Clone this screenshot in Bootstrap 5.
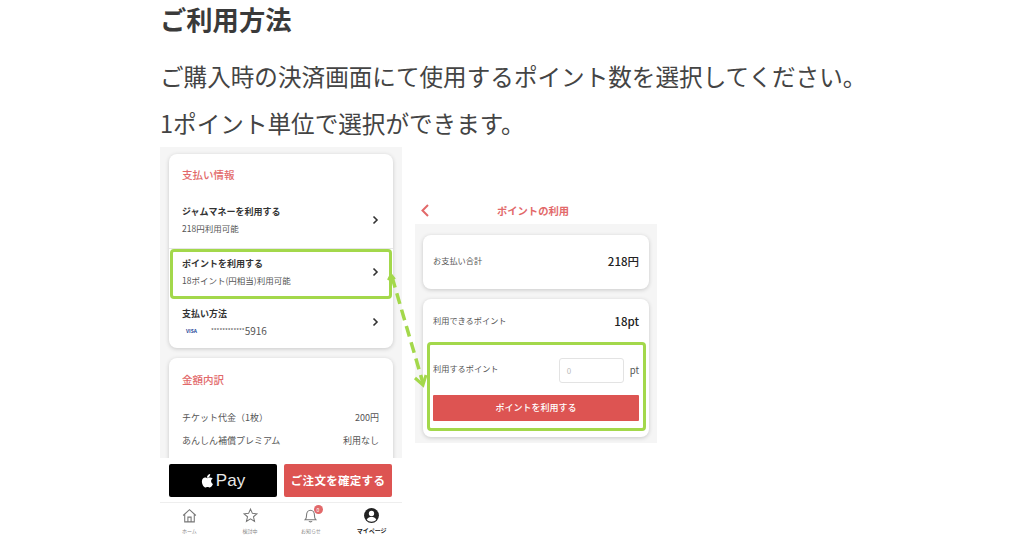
<!DOCTYPE html>
<html lang="ja">
<head>
  <meta charset="UTF-8" />
  <title>ご利用方法</title>
  <link href="https://cdn.jsdelivr.net/npm/bootstrap@5.3.0/dist/css/bootstrap.min.css" rel="stylesheet" />
  <style>
    html, body { height: 538px; overflow: hidden; background: #fff; }
    body { font-family: "Noto Sans CJK JP", "Noto Sans", sans-serif; color: #3d3d3d; }
    .page-wrap { position: relative; width: 1024px; height: 538px; padding-left: 160px; overflow: hidden; }
    .page-title { font-size: 26.3px; font-weight: 700; line-height: 38px; margin: 0; color: #3a3a3a; height: 53px; }
    .page-text { font-size: 23.6px; line-height: 47px; margin: 0; white-space: nowrap; color: #444; }
    .shots { gap: 13px; }
    .phone-left { width: 242px; height: 391px; flex: none; }
    .pay-area { height: 311px; background: #f5f5f5; padding: 7px 9px 0 9px; overflow: hidden; }
    .pay-card { background: #fff; border-radius: 8px; box-shadow: 0 1px 4px rgba(0,0,0,.18); }
    .info-card { height: 194px; padding-top: 14px; margin-bottom: 10px; }
    .sum-card { height: 120px; padding: 15px 14px 0 13px; }
    .red-head { color: #e2696a; font-size: 10.5px; font-weight: 500; line-height: 14px; }
    .info-head { padding-left: 13px; }
    .pay-row { height: 50px; padding: 0 13px 0 13px; display: flex; align-items: center; justify-content: space-between; }
    .pay-row-first { height: 53px; margin-top: 14px; border-bottom: 1px solid #e6e6e6; padding-bottom: 0; }
    .row-text { padding-bottom: 4px; }
    .row-main { font-size: 9px; font-weight: 700; color: #333; line-height: 13px; }
    .row-sub { font-size: 8.5px; color: #555; line-height: 13px; margin-top: 4px; white-space: nowrap; }
    .row-arrow { width: 7px; height: 10px; flex: none; margin-right: 1px; margin-bottom: 4px; }
    .picked { outline: 3px solid #a3d84b; outline-offset: -3px; border-radius: 4px; margin: 0 1px; padding: 0 12px; }
    .visa-text { color: #2b4b9b; font-size: 5px; font-weight: 700; width: 29px; padding-left: 4px; }
    .card-stars { font-size: 6px; }
    .card-last { font-size: 10px; }
    .sum-row { display: flex; justify-content: space-between; font-size: 9px; color: #555; line-height: 13px; }
    .buy-bar { height: 45px; background: #fff; padding: 6px 10px 0 9px; gap: 7px; border-bottom: 1px solid #eee; }
    .apple-btn { width: 108px; height: 33px; background: #000; color: #e8e8e8; border-radius: 2px; font-family: "Liberation Sans", sans-serif; font-size: 17px; gap: 2px; }
    .order-btn { width: 108px; height: 33px; background: #dd5452; color: #fff; border-radius: 2px; font-size: 11.5px; font-weight: 700; letter-spacing: .3px; }
    .tab-bar { height: 35px; margin-left: -1px; }
    .tab-item { width: 61px; color: #8a8a8a; font-size: 5px; line-height: 7px; gap: 3px; position: relative; }
    .tab-item svg { width: 17px; height: 17px; }
    .tab-on { color: #222; font-weight: 700; font-size: 6px; }
    .notice-dot { position: absolute; top: -2px; left: 33px; width: 9px; height: 9px; border-radius: 50%; background: #e2696a; color: #fff; font-size: 5px; line-height: 9px; text-align: center; }
    .phone-right { width: 242px; flex: none; margin-top: 48px; }
    .back-head { height: 29px; position: relative; color: #e2696a; font-size: 10.3px; font-weight: 700; padding-right: 6px; padding-top: 2px; }
    .back-mark { position: absolute; left: 5px; top: 8px; width: 10px; height: 15px; }
    .point-area { height: 219px; background: #f5f5f5; padding: 11px 8px 0 8px; }
    .total-card { height: 54px; padding: 0 10px; margin-bottom: 10px; font-size: 8.2px; color: #555; }
    .big-num { font-size: 11.5px; font-weight: 500; color: #222; }
    .soft-label { margin-bottom: 3px; }
    .point-card { height: 138px; }
    .can-row { height: 43px; padding: 3px 10px 0 10px; font-size: 8.2px; color: #555; }
    .use-box { height: 89px; margin: 0 3px 0 4px; padding: 0 4px 0 3px; border: 3px solid #a3d84b; border-radius: 4px; }
    .use-line { height: 50px; font-size: 8.2px; color: #555; }
    .point-input { width: 65px; height: 25px; border: 1px solid #e3e3e3; border-radius: 3px; font-size: 8px; color: #bbb; padding-left: 7px; line-height: 23px; margin-left: auto; margin-right: 6px; }
    .unit-pt { font-size: 9.5px; }
    .use-btn { height: 26px; background: #dd5452; color: #fff; border-radius: 1px; font-size: 9px; font-weight: 500; }
    .jump-arrow { position: absolute; left: 380px; top: 270px; width: 50px; height: 125px; pointer-events: none; }
  </style>
</head>
<body>
  <div class="page-wrap">
    <h1 class="page-title">ご利用方法</h1>
    <p class="page-text">ご購入時の決済画面にて使用するポイント数を選択してください。</p>
    <p class="page-text">1ポイント単位で選択ができます。</p>

    <div class="d-flex shots">
      <!-- 支払い画面 -->
      <div class="phone-left">
        <div class="pay-area">
          <div class="pay-card info-card">
            <div class="red-head info-head">支払い情報</div>
            <div class="pay-row pay-row-first">
              <div class="row-text">
                <div class="row-main">ジャムマネーを利用する</div>
                <div class="row-sub">218円利用可能</div>
              </div>
              <svg class="row-arrow" viewBox="0 0 7 10"><path d="M1.500 1.500 5 5 1.500 8.500" fill="none" stroke="#333" stroke-width="1.600"/></svg>
            </div>
            <div class="pay-row picked">
              <div class="row-text">
                <div class="row-main">ポイントを利用する</div>
                <div class="row-sub">18ポイント(円相当)利用可能</div>
              </div>
              <svg class="row-arrow" viewBox="0 0 7 10"><path d="M1.500 1.500 5 5 1.500 8.500" fill="none" stroke="#333" stroke-width="1.600"/></svg>
            </div>
            <div class="pay-row">
              <div class="row-text">
                <div class="row-main">支払い方法</div>
                <div class="row-sub d-flex align-items-center"><span class="visa-text">VISA</span><span class="card-stars">************</span><span class="card-last">5916</span></div>
              </div>
              <svg class="row-arrow" viewBox="0 0 7 10"><path d="M1.500 1.500 5 5 1.500 8.500" fill="none" stroke="#333" stroke-width="1.600"/></svg>
            </div>
          </div>
          <div class="pay-card sum-card">
            <div class="red-head">金額内訳</div>
            <div class="sum-row" style="margin-top:24px"><span>チケット代金（1枚）</span><span>200円</span></div>
            <div class="sum-row" style="margin-top:10px"><span>あんしん補償プレミアム</span><span>利用なし</span></div>
          </div>
        </div>
        <div class="d-flex buy-bar">
          <div class="d-flex align-items-center justify-content-center apple-btn">
            <svg width="13" height="15" viewBox="0 0 24 28"><path fill="#fff" d="M17 2c.2 2-.6 3.600-1.600 4.800-1.100 1.300-2.700 2.200-4.300 2.100-.2-1.800.6-3.600 1.600-4.700C13.800 3 15.600 2.100 17 2zM21.800 10.300c-2.600 1.600-3.200 3.500-3.100 5.200.1 2.200 1.300 4 3.500 5-.8 2.100-3.400 6.500-5.800 6.500-1.600 0-2.300-1-4.200-1-2 0-2.800 1-4.300 1C5 27 1.500 21 1.500 16c0-5 3.200-7.400 6.100-7.400 1.700 0 3.200 1.100 4.200 1.100 1 0 2.700-1.200 4.700-1.100 1.800.1 3.400.6 5.300 1.700z"/></svg>
            <span>Pay</span>
          </div>
          <div class="d-flex align-items-center justify-content-center order-btn">ご注文を確定する</div>
        </div>
        <div class="d-flex align-items-center tab-bar">
          <div class="d-flex flex-column align-items-center tab-item">
            <svg viewBox="0 0 16 16"><path d="M2 8 8 2.500 14 8M3.500 7v7h9V7M6.500 14V9.500h3V14" fill="none" stroke="#777" stroke-width="1"/></svg>
            <span>ホーム</span>
          </div>
          <div class="d-flex flex-column align-items-center tab-item">
            <svg viewBox="0 0 16 16"><path d="M8 2l1.800 4 4.200.4-3.200 2.800 1 4.300L8 11.200 4.200 13.500l1-4.300L2 6.400 6.200 6z" fill="none" stroke="#777" stroke-width="1"/></svg>
            <span>検討中</span>
          </div>
          <div class="d-flex flex-column align-items-center tab-item">
            <svg viewBox="0 0 16 16"><path d="M3 12c1-1 1.300-2 1.300-4.500C4.300 5 6 3 8 3s3.700 2 3.700 4.500c0 2.500.3 3.500 1.300 4.500zM6.500 13.500c.4.700 2.600.700 3 0" fill="none" stroke="#777" stroke-width="1"/></svg>
            <span class="notice-dot">0</span>
            <span>お知らせ</span>
          </div>
          <div class="d-flex flex-column align-items-center tab-item tab-on">
            <svg viewBox="0 0 16 16"><circle cx="8" cy="8" r="7" fill="#222"/><circle cx="8" cy="6" r="2.500" fill="#fff"/><path d="M3.500 12c1-2 2.800-2.800 4.500-2.800s3.500.8 4.500 2.800c-1 1.100-2.700 1.800-4.500 1.800S4.500 13.100 3.500 12z" fill="#fff"/></svg>
            <span>マイページ</span>
          </div>
        </div>
      </div>

      <!-- ポイント画面 -->
      <div class="phone-right">
        <div class="d-flex align-items-center justify-content-center back-head">
          <svg class="back-mark" viewBox="0 0 10 15"><path d="M8 2 2.500 7.500 8 13" fill="none" stroke="#e2696a" stroke-width="2"/></svg>
          ポイントの利用
        </div>
        <div class="point-area">
          <div class="pay-card total-card d-flex align-items-center justify-content-between">
            <span class="soft-label">お支払い合計</span><span class="big-num">218円</span>
          </div>
          <div class="pay-card point-card">
            <div class="d-flex align-items-center justify-content-between can-row">
              <span class="soft-label">利用できるポイント</span><span class="big-num">18pt</span>
            </div>
            <div class="use-box">
              <div class="d-flex align-items-center use-line">
                <span class="soft-label">利用するポイント</span>
                <div class="point-input">0</div>
                <span class="unit-pt">pt</span>
              </div>
              <div class="d-flex align-items-center justify-content-center use-btn">ポイントを利用する</div>
            </div>
          </div>
        </div>
      </div>
    </div>

    <svg class="jump-arrow" viewBox="0 0 50 125">
      <path d="M12 7 43 113" fill="none" stroke="#a3d84b" stroke-width="3.500" stroke-dasharray="11 6"/>
      <path d="M8 10 11 4 15 9" fill="none" stroke="#a3d84b" stroke-width="2"/>
      <path d="M35 108 43 115 46 105" fill="none" stroke="#a3d84b" stroke-width="3"/>
    </svg>
  </div>
  <script src="https://cdn.jsdelivr.net/npm/bootstrap@5.3.0/dist/js/bootstrap.bundle.min.js"></script>
</body>
</html>
